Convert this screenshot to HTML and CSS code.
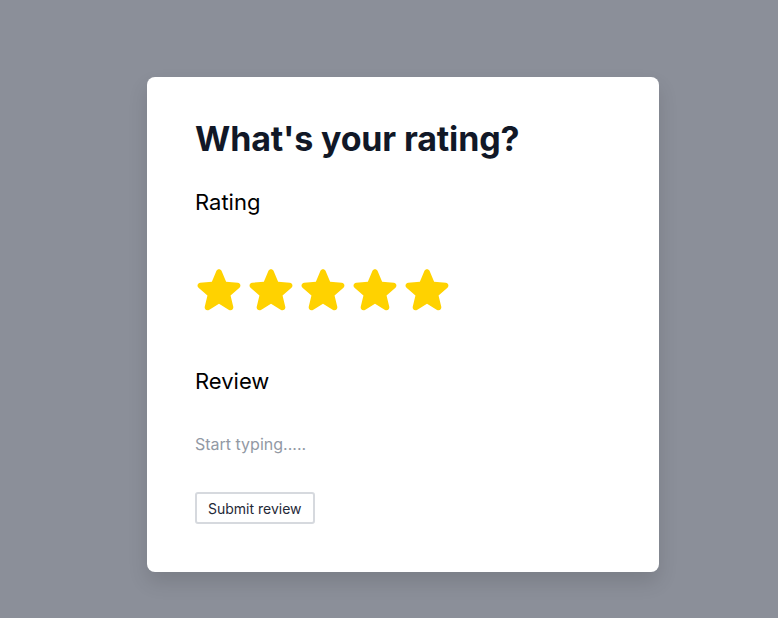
FILE: index.html
```html
<!DOCTYPE html>
<html lang="en">
<head>
    <meta charset="UTF-8">
    <meta name="viewport" content="width=device-width, initial-scale=1.0">
    <title>What's your rating?</title>
    <link rel="stylesheet" href="styles.css">
</head>
<body>
    <div class="card">
        <h1>What's your rating?</h1>
        <form id="reviewForm">
            <div class="label">Rating</div>
            <div class="stars">
                <svg viewBox="0 0 24 24"><path d="M10.788 3.21c.448-1.077 1.976-1.077 2.424 0l2.082 5.006 5.404.434c1.164.093 1.636 1.545.749 2.305l-4.117 3.527 1.257 5.273c.271 1.136-.964 2.033-1.960 1.425L12 18.354 7.373 21.180c-.996.608-2.231-.29-1.960-1.425l1.257-5.273-4.117-3.527c-.887-.76-.415-2.212.749-2.305l5.404-.434 2.082-5.005Z"/></svg>
                <svg viewBox="0 0 24 24"><path d="M10.788 3.21c.448-1.077 1.976-1.077 2.424 0l2.082 5.006 5.404.434c1.164.093 1.636 1.545.749 2.305l-4.117 3.527 1.257 5.273c.271 1.136-.964 2.033-1.960 1.425L12 18.354 7.373 21.180c-.996.608-2.231-.29-1.960-1.425l1.257-5.273-4.117-3.527c-.887-.76-.415-2.212.749-2.305l5.404-.434 2.082-5.005Z"/></svg>
                <svg viewBox="0 0 24 24"><path d="M10.788 3.21c.448-1.077 1.976-1.077 2.424 0l2.082 5.006 5.404.434c1.164.093 1.636 1.545.749 2.305l-4.117 3.527 1.257 5.273c.271 1.136-.964 2.033-1.960 1.425L12 18.354 7.373 21.180c-.996.608-2.231-.29-1.960-1.425l1.257-5.273-4.117-3.527c-.887-.76-.415-2.212.749-2.305l5.404-.434 2.082-5.005Z"/></svg>
                <svg viewBox="0 0 24 24"><path d="M10.788 3.21c.448-1.077 1.976-1.077 2.424 0l2.082 5.006 5.404.434c1.164.093 1.636 1.545.749 2.305l-4.117 3.527 1.257 5.273c.271 1.136-.964 2.033-1.960 1.425L12 18.354 7.373 21.180c-.996.608-2.231-.29-1.960-1.425l1.257-5.273-4.117-3.527c-.887-.76-.415-2.212.749-2.305l5.404-.434 2.082-5.005Z"/></svg>
                <svg viewBox="0 0 24 24"><path d="M10.788 3.21c.448-1.077 1.976-1.077 2.424 0l2.082 5.006 5.404.434c1.164.093 1.636 1.545.749 2.305l-4.117 3.527 1.257 5.273c.271 1.136-.964 2.033-1.960 1.425L12 18.354 7.373 21.180c-.996.608-2.231-.29-1.960-1.425l1.257-5.273-4.117-3.527c-.887-.76-.415-2.212.749-2.305l5.404-.434 2.082-5.005Z"/></svg>
            </div>
            <label class="label" for="review">Review</label>
            <textarea id="review" name="review" placeholder="Start typing....."></textarea>
            <button type="submit">Submit review</button>
        </form>
    </div>
</body>
</html>
```

FILE: styles.css
```css
body {
    font-family: Inter, "Helvetica Neue", Arial, sans-serif;
    background: #8b8f99;
    margin: 0;
    padding: 0 0 0 28px;
    height: 100vh;
    display: flex;
    justify-content: center;
    align-items: flex-start;
}

.card {
    background: #fff;
    width: 416px;
    margin-top: 77px;
    padding: 41px 48px 48px;
    border-radius: 8px;
    box-shadow: 0 10px 20px rgba(0, 0, 0, 0.12);
}

h1 {
    color: #111827;
    font-size: 34px;
    font-weight: 700;
    letter-spacing: -0.15px;
    margin: 0 0 28px;
    line-height: 42px;
}

form {
    display: flex;
    flex-direction: column;
    align-items: flex-start;
}

.label {
    color: #000;
    font-size: 22px;
    line-height: 28px;
}

.stars {
    display: flex;
    margin: 48px 0 51px -2px;
}

.stars svg {
    width: 52px;
    height: 52px;
    fill: #ffd200;
}

textarea {
    font-family: inherit;
    font-size: 16px;
    border: none;
    outline: none;
    resize: none;
    padding: 0;
    margin-top: 39px;
    height: 54px;
    width: 100%;
    color: #111827;
}

textarea::placeholder {
    color: #9299a4;
}

button {
    font-family: inherit;
    font-size: 14px;
    color: #1f2937;
    background: #fff;
    border: 2px solid #d6d9de;
    border-radius: 3px;
    padding: 6px 11px 5px;
    margin-top: 4px;
    cursor: pointer;
}
```
